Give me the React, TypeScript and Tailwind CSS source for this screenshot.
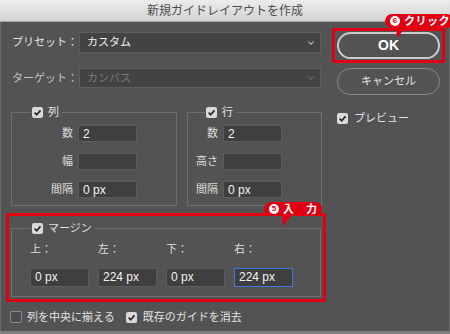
import React from "react";
import { ChevronDown } from "lucide-react";

const FONT = "font-['Liberation_Sans','Noto_Sans_CJK_JP',sans-serif]";

const Check = ({ checked }: { checked: boolean }) =>
  checked ? (
    <span className="w-[11px] h-[11px] rounded-[2px] bg-[#d9d9d9] flex items-center justify-center shrink-0">
      <svg viewBox="0 0 10 10" className="w-[9px] h-[9px]">
        <path d="M1.8 5.2 L4.1 7.5 L8.3 2.6" stroke="#2a2a2a" strokeWidth="1.9" fill="none" />
      </svg>
    </span>
  ) : (
    <span className="w-[12px] h-[12px] rounded-[2px] border border-[#8c8c8c] bg-[#4b4b4b] shrink-0" />
  );

const Field = ({ value = "", w = "w-[59px]", h = "h-[17px]", focus = false }: { value?: string; w?: string; h?: string; focus?: boolean }) => (
  <input
    readOnly
    value={value}
    className={`${w} ${h} bg-[#3f3f3f] border ${focus ? "border-[#3d7ad6]" : "border-[#5b5b5b]"} text-[12px] text-[#f2f2f2] pl-[4px] outline-none`}
  />
);

const Row = ({ label, value, labelW }: { label: string; value?: string; labelW: string }) => (
  <div className="flex items-center gap-[5px]">
    <span className={`${labelW} text-right text-[11px] text-[#dcdcdc] leading-none whitespace-nowrap`}>{label}</span>
    <Field value={value} />
  </div>
);

const Select = ({ text, disabled }: { text: string; disabled?: boolean }) => (
  <div className="flex-1 flex items-center justify-between bg-[#434343] border border-[#5d5d5d] pl-[7px] pr-[4px] h-full">
    <span className={`text-[11px] ${disabled ? "text-[#7c7c7c]" : "text-[#f0f0f0]"}`}>{text}</span>
    <ChevronDown size={10} strokeWidth={2.5} className={disabled ? "text-[#6e6e6e]" : "text-[#cfcfcf]"} />
  </div>
);

const Badge = ({ num, text, className, tail }: { num: string; text: string; className: string; tail: string }) => (
  <div className={`absolute ${className}`}>
    <div className="h-[14px] rounded-[7px] bg-[#e00012] flex items-center pl-[5px] pr-[4px] gap-[4px] whitespace-nowrap">
      <span className="w-[10px] h-[10px] rounded-full bg-white text-[#e00012] text-[8px] font-bold flex items-center justify-center leading-none shrink-0">
        {num}
      </span>
      <span className="text-white text-[11px] font-bold leading-none tracking-[0.5px]">{text}</span>
    </div>
    <svg className={`absolute ${tail}`} width="12" height="11" viewBox="0 0 12 11">
      <polygon points="1,0 11,0 2,11" fill="#e00012" />
    </svg>
  </div>
);

export default function App() {
  return (
    <div className={`w-[450px] h-[334px] bg-[#535353] relative overflow-hidden ${FONT}`}>
      {/* title bar */}
      <div className="h-[22px] bg-gradient-to-b from-[#ececec] to-[#d3d3d3] border-b border-[#a3a3a3] flex items-center justify-center">
        <span className="text-[12px] text-[#4d4d4d] leading-none">新規ガイドレイアウトを作成</span>
      </div>

      <div className="flex h-[309px] border-x border-[#6b6b6b]">
        {/* left column */}
        <div className="w-[329px] pl-[4px] flex flex-col">
          <div className="flex items-center h-[21px] mt-[10px] ml-[7px] mr-[9px]">
            <span className="w-[67px] shrink-0 whitespace-nowrap text-[11px] text-[#e2e2e2]">プリセット：</span>
            <Select text="カスタム" />
          </div>
          <div className="flex items-center h-[20px] mt-[15px] ml-[7px] mr-[9px]">
            <span className="w-[67px] shrink-0 whitespace-nowrap text-[11px] text-[#c4c4c4]">ターゲット：</span>
            <Select text="カンバス" disabled />
          </div>

          <div className="flex gap-[10px] ml-[6px] mt-[18px]">
            <fieldset className="w-[166px] border border-[#6f6f6f] pb-[7px]">
              <legend className="ml-[19px] px-[1px] h-[12px] flex items-center gap-[5px]">
                <Check checked />
                <span className="text-[11px] text-[#e2e2e2] leading-none pr-[2px]">列</span>
              </legend>
              <div className="flex flex-col gap-[11px] pt-[7px]">
                <Row label="数" value="2" labelW="w-[61px]" />
                <Row label="幅" labelW="w-[61px]" />
                <Row label="間隔" value="0 px" labelW="w-[61px]" />
              </div>
            </fieldset>
            <fieldset className="w-[135px] border border-[#6f6f6f] pb-[7px]">
              <legend className="ml-[17px] px-[1px] h-[12px] flex items-center gap-[5px]">
                <Check checked />
                <span className="text-[11px] text-[#e2e2e2] leading-none pr-[2px]">行</span>
              </legend>
              <div className="flex flex-col gap-[11px] pt-[7px]">
                <Row label="数" value="2" labelW="w-[30px]" />
                <Row label="高さ" labelW="w-[30px]" />
                <Row label="間隔" value="0 px" labelW="w-[30px]" />
              </div>
            </fieldset>
          </div>

          {/* margin */}
          <div className="mt-[7px] ml-[1px] w-[320px] border-[3px] border-[#e00012] rounded-[2px] px-[2px] pt-[6px] pb-[2px]">
            <fieldset className="border border-[#6f6f6f] pb-[8px]">
              <legend className="ml-[19px] px-[1px] h-[12px] flex items-center gap-[5px]">
                <Check checked />
                <span className="text-[11px] text-[#e2e2e2] leading-none pr-[2px]">マージン</span>
              </legend>
              <div className="grid grid-cols-[59px_59px_59px_59px] gap-x-[9px] pl-[18px] pt-[10px]">
                {["上：", "左：", "下：", "右："].map((l) => (
                  <span key={l} className="text-[11px] text-[#dcdcdc] leading-none h-[12px]">
                    {l}
                  </span>
                ))}
                <div className="mt-[8px]"><Field value="0 px" h="h-[19px]" /></div>
                <div className="mt-[8px]"><Field value="224 px" h="h-[19px]" /></div>
                <div className="mt-[8px]"><Field value="0 px" h="h-[19px]" /></div>
                <div className="mt-[8px]"><Field value="224 px" h="h-[19px]" focus /></div>
              </div>
            </fieldset>
          </div>

          <div className="flex items-center mt-[8px] ml-[5px] h-[14px] whitespace-nowrap">
            <Check checked={false} />
            <span className="ml-[5px] text-[11px] text-[#e2e2e2]">列を中央に揃える</span>
            <span className="ml-[11px]"><Check checked /></span>
            <span className="ml-[6px] text-[11px] text-[#e2e2e2]">既存のガイドを消去</span>
          </div>
        </div>

        {/* right column */}
        <div className="flex flex-col">
          <div className="mt-[6px] ml-[2px] w-[113px] h-[35px] border-[3px] border-[#e00012] rounded-[2px] px-[2px] py-[1px]">
            <button className="w-full h-full rounded-full border-2 border-[#cacaca] text-white text-[14px] font-bold">OK</button>
          </div>
          <button className="mt-[5px] ml-[7px] w-[103px] h-[27px] rounded-full border border-[#888888] text-[11px] text-[#e6e6e6] whitespace-nowrap">
            キャンセル
          </button>
          <div className="flex items-center mt-[15px] ml-[7px] whitespace-nowrap">
            <Check checked />
            <span className="ml-[6px] text-[11px] text-[#e2e2e2]">プレビュー</span>
          </div>
        </div>
      </div>
      <div className="h-[3px] bg-[#7f7f7f]" />

      <Badge num="6" text="クリック" className="left-[385px] top-[14px]" tail="left-[10px] top-[13px]" />
      <Badge num="5" text="入　力" className="left-[264px] top-[202px]" tail="left-[17px] top-[13px]" />
    </div>
  );
}
